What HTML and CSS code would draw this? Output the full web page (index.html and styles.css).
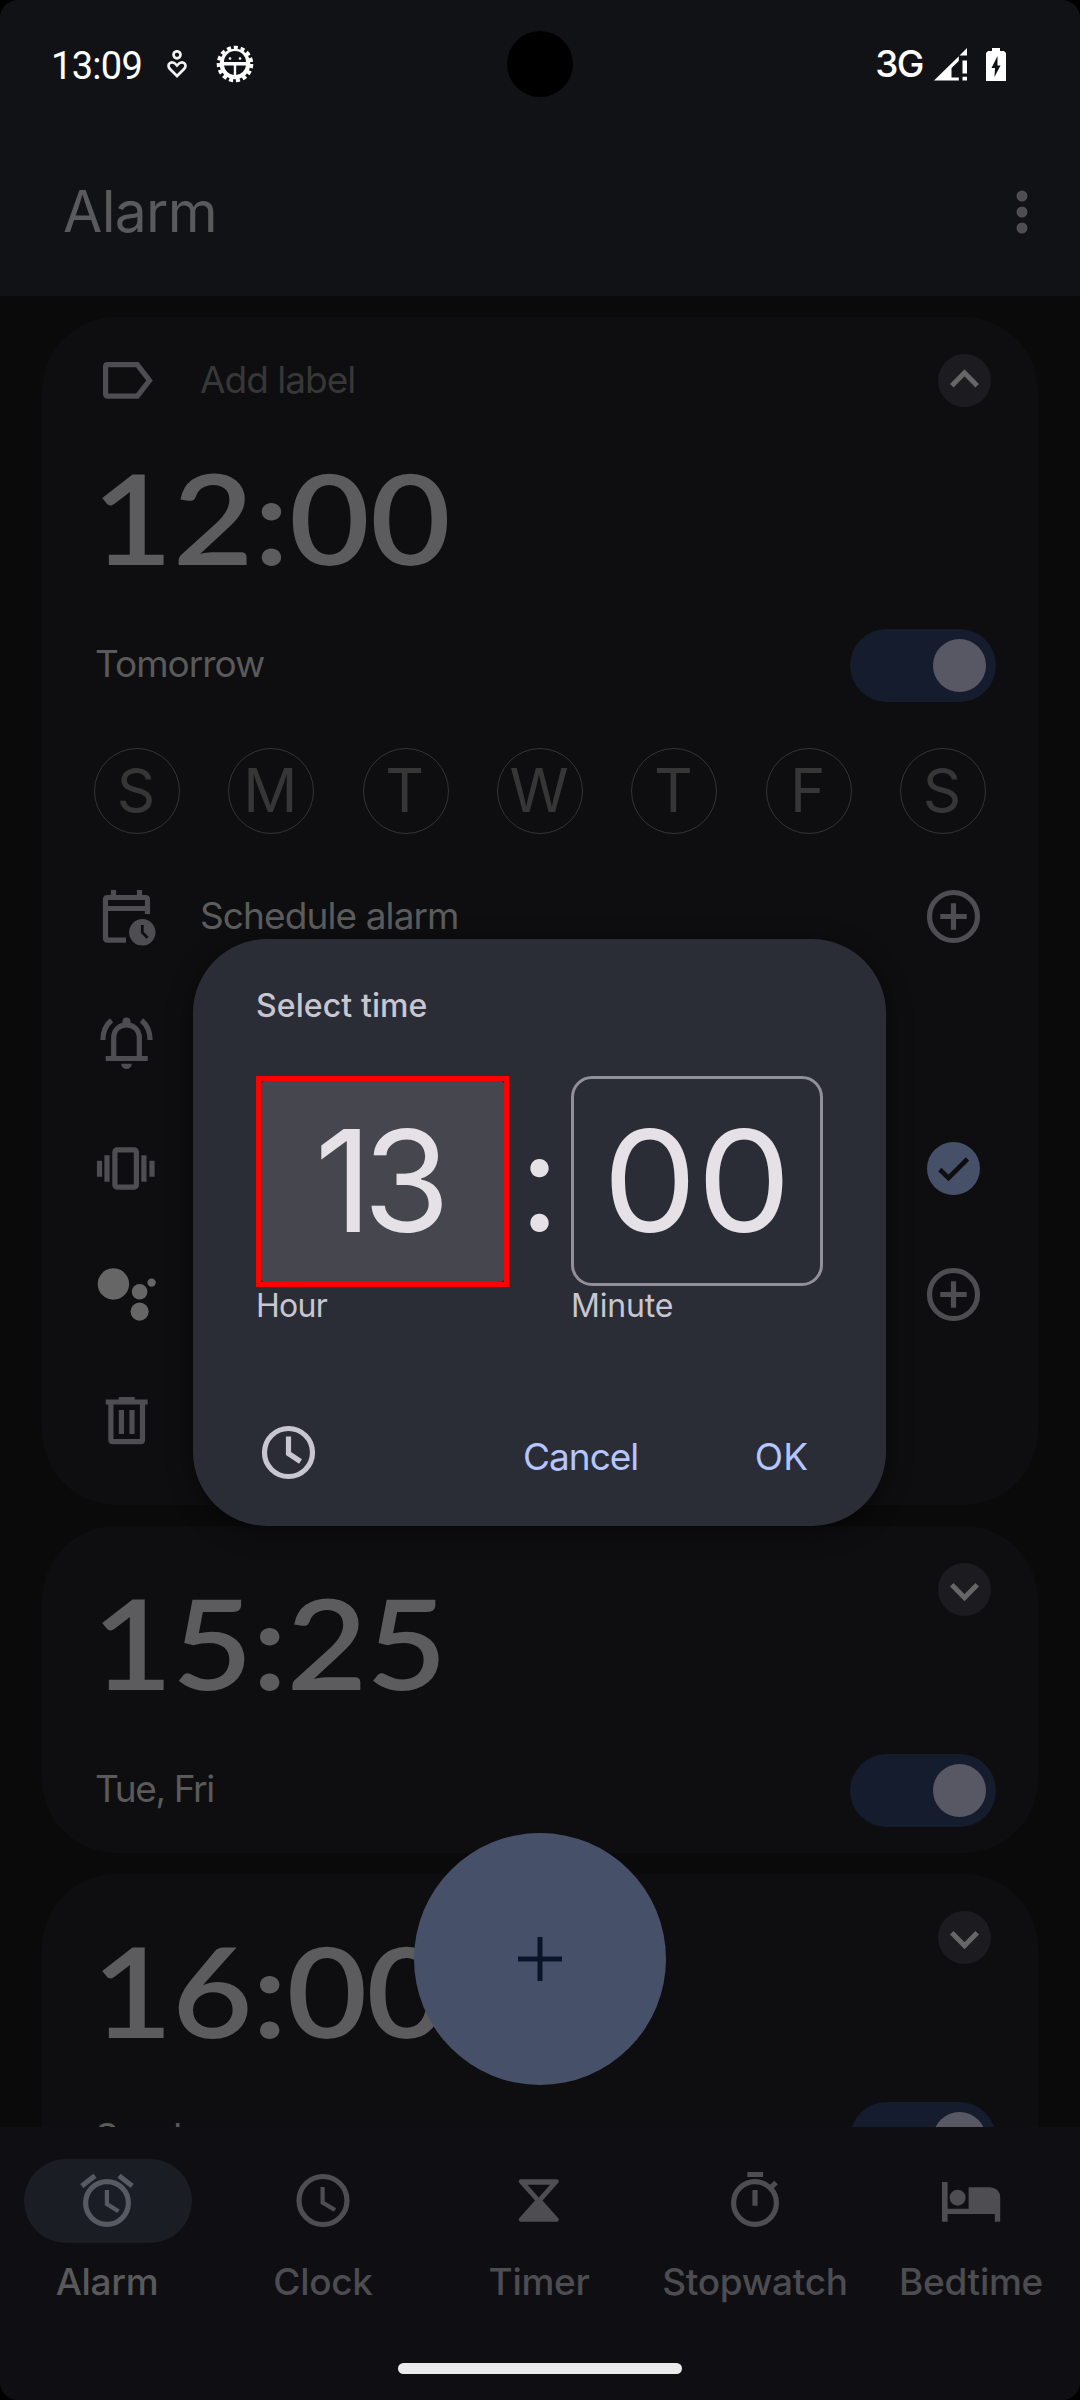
FILE: index.html
```html
<!DOCTYPE html>
<html lang="en">
<head>
<meta charset="utf-8">
<title>Alarm</title>
<link rel="stylesheet" href="styles.css">
</head>
<body>
<div class="screen">
  <header class="top">
    <div class="status">
      <div class="status-left">
        <span class="status-time">13:09</span>
        <svg class="heart" width="20" height="28" viewBox="0 0 20 28" fill="none" stroke="#f2f2f2" stroke-width="2.700"><circle cx="10" cy="4.800" r="3.500"/><path d="M10 26L3 19C-1.500 14 5 9.500 10 15.500C15 9.500 21.500 14 17 19Z"/></svg>
        <svg width="38" height="38" viewBox="-19 -19 38 38"><circle r="15.800" fill="none" stroke="#fff" stroke-width="5" stroke-dasharray="3.900 2.719"/><circle r="15.300" fill="#fff"/><path d="M-11-2A11 11 0 0 1 11-2ZM-11 1.500H-1.200V11A11 11 0 0 1-11 1.500ZM11 1.500H1.200V11A11 11 0 0 0 11 1.500Z" fill="#111216"/><circle cx="-5" cy="-5.500" r="1.300" fill="#fff"/><circle cx="5" cy="-5.500" r="1.300" fill="#fff"/></svg>
      </div>
      <div class="camera"></div>
      <div class="status-right">
        <span class="network">3G</span>
        <svg class="signal" width="33" height="33" viewBox="0 0 33 33" fill="#fff"><path d="M0 32.500L24.800 8.300V13L17.500 20V29.500H24.800V32.500ZM25.500 7.500L33 0V7.500ZM28.500 12.500H33V25.500H28.500ZM28.500 28.700H33V32.500H28.500Z"/></svg>
        <svg width="20" height="33" viewBox="0 0 20 33"><path d="M6 0H14V3H18L20 5V33H0V5L2 3H6Z" fill="#fff"/><path d="M11.500 8L5.500 20H9L8.500 29L14.500 17.500H11.500Z" fill="#111216"/></svg>
      </div>
    </div>
    <div class="appbar">
      <h1 class="title">Alarm</h1>
      <svg width="12" height="44" viewBox="0 0 12 44" fill="#4f4e53"><circle cx="6" cy="6" r="5.500"/><circle cx="6" cy="22" r="5.500"/><circle cx="6" cy="38" r="5.500"/></svg>
    </div>
  </header>

  <main class="list">
    <section class="card card-open">
      <div class="label-row">
        <svg class="icon" viewBox="0 0 63 63"><path d="M12.500 15.700H42.300L54.500 31.500L42.300 47.200H12.500Q10.600 47.200 10.600 45.300V17.600Q10.600 15.700 12.500 15.700Z"/></svg>
        <span class="row-text label-text">Add label</span>
        <svg class="chevron" viewBox="-26.500 -26.500 53 53"><path d="M-12.700 5.200L0-7.700L12.700 5.200"/></svg>
      </div>
      <div class="time">12:00</div>
      <div class="state-row">
        <span class="state tomorrow">Tomorrow</span>
        <span class="toggle"><span class="thumb"></span></span>
      </div>
      <div class="days">
        <span class="day">S</span><span class="day">M</span><span class="day">T</span><span class="day">W</span><span class="day">T</span><span class="day">F</span><span class="day">S</span>
      </div>
      <div class="option">
        <svg class="icon" viewBox="0 0 63 63"><path d="M31 55.200H12.500Q10.500 55.200 10.500 53V14.500Q10.500 12.500 12.500 12.500H50.500Q52.500 12.500 52.500 14.500V29M10.500 23.500H52.500M18.500 5V13M44.500 5V13"/><circle class="solid" cx="47.300" cy="47.300" r="13.200"/><path class="cut" d="M47.300 40V47.500L52.500 52.700"/></svg>
        <span class="row-text schedule">Schedule alarm</span>
        <svg class="icon" viewBox="0 0 63 63"><circle cx="31.500" cy="31.500" r="24"/><path d="M18.300 31.500H44.700M31.500 18.300V44.700"/></svg>
      </div>
      <div class="option">
        <svg class="icon" viewBox="0 0 63 63"><path d="M18.700 47V27C18.700 9.500 44.300 9.500 44.300 27V47M10.700 47.500H52.700M7.900 29C7.900 21 11 14 16.500 9.300M55.100 29C55.100 21 52 14 46.500 9.300"/><path class="solid" d="M26.200 52.700H36.800A5.300 5.300 0 0 1 26.200 52.700ZM27.500 14V10.500A4 4 0 0 1 35.500 10.500V14Z"/></svg>
      </div>
      <div class="option">
        <svg class="icon" viewBox="0 0 63 63"><rect x="19.900" y="12.900" width="21.500" height="37.200" rx="2"/><path d="M12 18.300V44.700M4.500 23.700V39.700M48.900 18.300V44.700M57 23.700V39.700"/></svg>
        <svg class="icon push" viewBox="0 0 63 63"><circle class="checked" cx="31.500" cy="31.500" r="26.500"/><path class="tick" d="M17.800 32.500L26.500 41L45.500 22"/></svg>
      </div>
      <div class="option">
        <svg class="icon assistant" viewBox="0 0 63 63"><circle cx="18.400" cy="21" r="15.700"/><circle cx="44.600" cy="28.800" r="7.800"/><circle cx="56.600" cy="19.600" r="4.200"/><circle cx="44.600" cy="48.600" r="9.100"/></svg>
        <svg class="icon push" viewBox="0 0 63 63"><circle cx="31.500" cy="31.500" r="24"/><path d="M18.300 31.500H44.700M31.500 18.300V44.700"/></svg>
      </div>
      <div class="option">
        <svg class="icon" viewBox="0 0 63 63"><path d="M15.900 14V50.700Q15.900 52.700 17.900 52.700H45.500Q47.500 52.700 47.500 50.700V14M10.700 13H52.700M26.400 21V45M37 21V45"/><path class="solid" d="M23.700 8H39.700V12H23.700Z"/></svg>
      </div>
    </section>

    <section class="card card-closed">
      <div class="time-row">
        <div class="time">15:25</div>
        <svg class="chevron" viewBox="-26.500 -26.500 53 53"><path d="M-12.700-4.700L0 8.200L12.700-4.700"/></svg>
      </div>
      <div class="state-row">
        <span class="state tue">Tue, Fri</span>
        <span class="toggle"><span class="thumb"></span></span>
      </div>
    </section>

    <section class="card card-closed">
      <div class="time-row">
        <div class="time">16:00</div>
        <svg class="chevron" viewBox="-26.500 -26.500 53 53"><path d="M-12.700-4.700L0 8.200L12.700-4.700"/></svg>
      </div>
      <div class="state-row">
        <span class="state">Sunday</span>
        <span class="toggle"><span class="thumb"></span></span>
      </div>
    </section>
  </main>

  <nav class="nav">
    <div class="tabs">
      <div class="tab active">
        <span class="pill"><svg class="icon" viewBox="0 0 63 63"><circle cx="31" cy="34" r="21.400"/><path d="M5.800 17L19 6.700M43 6.700L56.200 17"/><path class="hand" d="M30.900 21V35L42.500 42.200"/></svg></span>
        <span class="tab-label">Alarm</span>
      </div>
      <div class="tab">
        <span class="pill"><svg class="icon" viewBox="0 0 63 63"><circle cx="31" cy="31.500" r="24"/><path class="hand" d="M30.600 18V33.500L43 41"/></svg></span>
        <span class="tab-label">Clock</span>
      </div>
      <div class="tab">
        <span class="pill"><svg class="icon" viewBox="0 0 63 63"><path class="solid" fill-rule="evenodd" d="M12.500 10.300H49Q51.500 11 50.500 13.500L34.500 31.500L50.500 49.500Q51.500 52 49 52.700H12.500Q10 52 11 49.500L27 31.500L11 13.500Q10 11 12.500 10.300ZM19.500 15.700L30.800 28.500L42 15.700Z"/></svg></span>
        <span class="tab-label">Timer</span>
      </div>
      <div class="tab">
        <span class="pill"><svg class="icon" viewBox="0 0 63 63"><circle cx="31" cy="34" r="21.400"/><path d="M23.300 5.500H39.100M31 21V36.700M45 20.500L52 13.500"/></svg></span>
        <span class="tab-label">Stopwatch</span>
      </div>
      <div class="tab">
        <span class="pill"><svg class="icon" viewBox="0 0 63 63"><path class="solid" d="M2 13H7.600V39.700H28.600V18.300H50Q60.200 19 60.200 29V52.700H54.800V44.900H7.600V52.700H2Z"/><circle class="solid" cx="17.600" cy="28.700" r="8"/></svg></span>
        <span class="tab-label">Bedtime</span>
      </div>
    </div>
    <div class="home-bar"></div>
  </nav>

  <button class="fab" aria-label="Add alarm"><svg width="44" height="44" viewBox="0 0 44 44"><path d="M0 22H44M22 0V44" stroke="#0a1429" stroke-width="5"/></svg></button>

  <div class="dialog">
    <h2 class="dialog-title">Select time</h2>
    <div class="fields">
      <div class="field">
        <div class="box box-hour"><span class="thirteen">13</span></div>
        <span class="caption cap-hour">Hour</span>
      </div>
      <div class="colon">:</div>
      <div class="field">
        <div class="box box-minute"><span class="zeros">00</span></div>
        <span class="caption cap-minute">Minute</span>
      </div>
    </div>
    <div class="actions">
      <svg class="icon mode" viewBox="0 0 63 63"><circle cx="32.500" cy="31.500" r="24"/><path d="M32.500 15.500V32.500L44.500 40.500"/></svg>
      <span class="action cancel">Cancel</span>
      <span class="action ok">OK</span>
    </div>
  </div>
</div>
</body>
</html>
```
FILE: styles.css
```css
* { box-sizing: border-box; }

body {
  margin: 0;
  background: #000;
  font-family: Inter, "Liberation Sans", sans-serif;
}

.screen {
  position: relative;
  display: flex;
  flex-direction: column;
  width: 1080px;
  height: 2400px;
  overflow: hidden;
  border-radius: 18px;
  background: #0a0a0a;
}

svg { display: block; flex: none; }

/* Top area */
.top { height: 296px; background: #111216; }

.status {
  display: grid;
  grid-template-columns: 1fr 66px 1fr;
  align-items: center;
  height: 128px;
}
.status-left { display: flex; align-items: center; padding-left: 51px; }
.status-time {
  width: 116px;
  font: 400 38px/50px Roboto, sans-serif;
  letter-spacing: -0.7px;
  color: #fff;
  padding-top: 3px;
}
.heart { margin-right: 29px; }
.camera { width: 66px; height: 66px; border-radius: 50%; background: #000; }
.status-right { display: flex; align-items: center; justify-content: flex-end; padding-right: 74px; }
.network { font-size: 37px; line-height: 50px; font-weight: 450; color: #fff; letter-spacing: -1.5px; margin-right: 11px; }
.signal { margin-right: 19px; }

.appbar {
  display: flex;
  align-items: center;
  justify-content: space-between;
  height: 168px;
  padding: 0 52px 1px 63px;
}
.title { margin: 0; font-size: 57px; line-height: 70px; font-weight: 400; color: #5a5a5c; letter-spacing: -0.7px; }

/* Alarm list */
.list {
  display: flex;
  flex-direction: column;
  gap: 21px;
  height: 1831px;
  padding: 21px 42px 0;
  overflow: hidden;
}
.card { flex: none; border-radius: 74px; background: #0e0e10; }
.card-open { height: 1188px; }
.card-closed { height: 327px; }

.icon { width: 63px; height: 63px; fill: none; stroke: #4e4d52; stroke-width: 5.2; }
.icon .solid { fill: #4e4d52; stroke: none; }
.icon .cut { stroke: #0e0e10; stroke-width: 2.8; }
.icon .hand { stroke-width: 4.2; }
.icon .checked { fill: #475069; stroke: none; }
.icon .tick { stroke: #0e0e10; stroke-width: 4.6; }
.assistant { fill: #666; stroke: none; }
.push { margin-left: auto; }

.chevron { width: 53px; height: 53px; border-radius: 50%; background: #1c1b1f; fill: none; stroke: #666; stroke-width: 5; }

.label-row { display: flex; align-items: center; height: 127px; padding: 0 47px 0 53px; }
.label-row .chevron { margin-left: auto; }
.row-text { margin-left: 42px; font-size: 37px; line-height: 48px; letter-spacing: -0.9px; color: #5c5c5d; }
.label-text { color: #373737; padding-bottom: 2px; letter-spacing: -1px; }

.time {
  padding-left: 50px;
  font: 600 125px/147px Lato, sans-serif;
  color: #5c5c5e;
  transform: scaleX(1.115);
  transform-origin: 50px 0;
}
.card-open .time { height: 145px; }
.time-row { display: flex; justify-content: space-between; height: 202px; padding: 37px 47px 0 0; }
.time-row .time { padding-top: 6px; letter-spacing: -0.8px; }

.state-row { display: flex; align-items: center; justify-content: space-between; height: 152px; padding: 0 42px 0 53px; }
.card-closed .state-row { height: 124px; }
.state { font-size: 37px; line-height: 48px; color: #5a5a5b; padding-bottom: 2px; letter-spacing: -1px; }
.tue { letter-spacing: -1.4px; }
.toggle { display: flex; justify-content: flex-end; width: 146px; height: 73px; padding: 10px; border-radius: 37px; background: #141c2e; }
.thumb { width: 53px; height: 53px; border-radius: 50%; background: #575864; }

.days { display: flex; justify-content: space-between; height: 100px; padding: 7px 52px; margin-bottom: 12px; }
.day {
  width: 86px;
  height: 86px;
  border: 1px solid #343437;
  border-radius: 50%;
  padding-right: 2px;
  font-size: 60px;
  line-height: 82px;
  text-align: center;
  color: #363636;
}

.option { display: flex; align-items: center; height: 126px; padding: 0 53px; }
.option .row-text + .icon { margin-left: auto; }

/* Bottom navigation */
.nav { height: 273px; padding-top: 32px; background: #0f0f13; }
.tabs { display: grid; grid-template-columns: repeat(5, 216px); height: 204px; }
.tab { display: flex; flex-direction: column; align-items: center; }
.pill { display: flex; align-items: center; justify-content: center; width: 168px; height: 84px; padding: 0 1px 2px 0; border-radius: 42px; }
.active .pill { background: #1a1d24; }
.active .icon { stroke: #575a63; }
.tab-label { margin-top: 14px; padding-right: 2px; font-size: 37px; line-height: 50px; font-weight: 500; letter-spacing: -0.3px; color: #4d4c51; white-space: nowrap; }
.active .tab-label { color: #59595a; }
.home-bar { width: 284px; height: 11px; margin: 0 auto; border-radius: 6px; background: #ebebeb; }

.fab {
  position: absolute;
  left: 414px;
  top: 1833px;
  display: flex;
  align-items: center;
  justify-content: center;
  width: 252px;
  height: 252px;
  padding: 0 1px 0 0;
  border: 0;
  border-radius: 50%;
  background: #475069;
}

/* Time picker dialog */
.dialog {
  position: absolute;
  left: 193px;
  top: 939px;
  width: 693px;
  height: 587px;
  padding: 42px 63px 0;
  border-radius: 74px;
  background: #2b2d36;
  box-shadow: 0 6px 26px rgba(0, 0, 0, 0.45);
}
.dialog-title { margin: 0; font-size: 32px; line-height: 50px; font-weight: 500; letter-spacing: 0.1px; color: #c8c6d0; }
.fields { display: grid; grid-template-columns: 253px 62px 252px; margin-top: 45px; }
.field { display: flex; flex-direction: column; }
.box {
  position: relative;
  display: flex;
  align-items: center;
  justify-content: center;
  height: 211px;
  border-radius: 21px;
  font-size: 141px;
  line-height: 168px;
  color: #e5e1e7;
}
.box-hour { background: #46464f; }
.box-hour::after { content: ""; position: absolute; inset: 0; border: 5px solid #f00; }
.box-minute { height: 210px; margin-bottom: 1px; border: 3px solid #918f9a; }
.thirteen { letter-spacing: -9px; margin-right: 9px; padding-bottom: 2px; }
.zeros { padding-bottom: 1px; transform: scaleX(1.06); }
.colon { font: 400 146px/197px Lato, sans-serif; text-align: center; color: #e5e1e7; padding-right: 1px; }
.caption { font-size: 32px; line-height: 38px; color: #c8c6d0; }
.cap-hour { letter-spacing: -0.7px; }
.cap-minute { letter-spacing: -0.2px; }

.actions { display: flex; align-items: center; height: 63px; margin-top: 96px; }
.mode { stroke: #c8c6d0; }
.action { font-size: 37px; line-height: 48px; color: #b4c5ff; padding-top: 8px; }
.cancel { margin-left: 204px; letter-spacing: -1px; }
.ok { margin-left: auto; margin-right: 15px; }
```
